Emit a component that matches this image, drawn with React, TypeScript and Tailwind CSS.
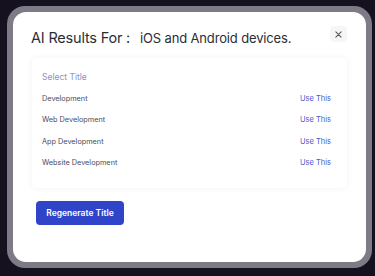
import React from "react";

const rows = ["Development", "Web Development", "App Development", "Website Development"];

export default function App() {
  return (
    <div className="w-[375px] h-[276px] bg-[#15111f] pt-[6px] pl-[7px]" style={{ fontFamily: "Inter, 'Noto Sans', sans-serif" }}>
      <div className="w-[365px] h-[262px] rounded-[18px] bg-[#7d7b85] p-[6px]">
        <div className="w-full h-full rounded-[13px] bg-white flex flex-col">
          <div className="flex items-start justify-between pl-[18px] pr-[19px] pt-[14px] whitespace-nowrap">
            <div className="flex items-baseline mt-[5px]">
              <span className="text-[14.5px] text-[#2b2d36] leading-none tracking-[-0.2px]">AI Results For :</span>
              <span className="ml-[10px] text-[13px] text-[#2b2d36] leading-none tracking-[-0.15px]">iOS and Android devices.</span>
            </div>
            <div className="w-[17px] h-[16px] rounded-[4px] bg-[#f6f6f8] flex items-center justify-center">
              <svg width="7" height="7" viewBox="0 0 8 8" fill="none" stroke="#555" strokeWidth="1.2" strokeLinecap="round">
                <path d="M1 1L7 7M7 1L1 7" />
              </svg>
            </div>
          </div>
          <div className="mx-[19px] mt-[12px] h-[130px] rounded-[4px] bg-white shadow-[0_0_6px_rgba(0,0,0,0.06)] px-[10px] pt-[13.5px] whitespace-nowrap">
            <div className="text-[8.5px] text-[#8b93c6] leading-[12px]">Select Title</div>
            <div className="mt-[9.6px] flex flex-col gap-[9.5px]">
              {rows.map((r) => (
                <div key={r} className="flex justify-between items-center h-[12px] text-[7.3px] leading-[12px]">
                  <span className="text-[#4a4c58]">{r}</span>
                  <span className="text-[#4957cf] mr-[6px] text-[7.5px]">Use This</span>
                </div>
              ))}
            </div>
          </div>
          <div className="pl-[23px] mt-[10px]">
            <button className="w-[88px] h-[24px] rounded-[4px] bg-[#2f44c8] text-white text-[8.5px] font-semibold">
              Regenerate Title
            </button>
          </div>
        </div>
      </div>
    </div>
  );
}
